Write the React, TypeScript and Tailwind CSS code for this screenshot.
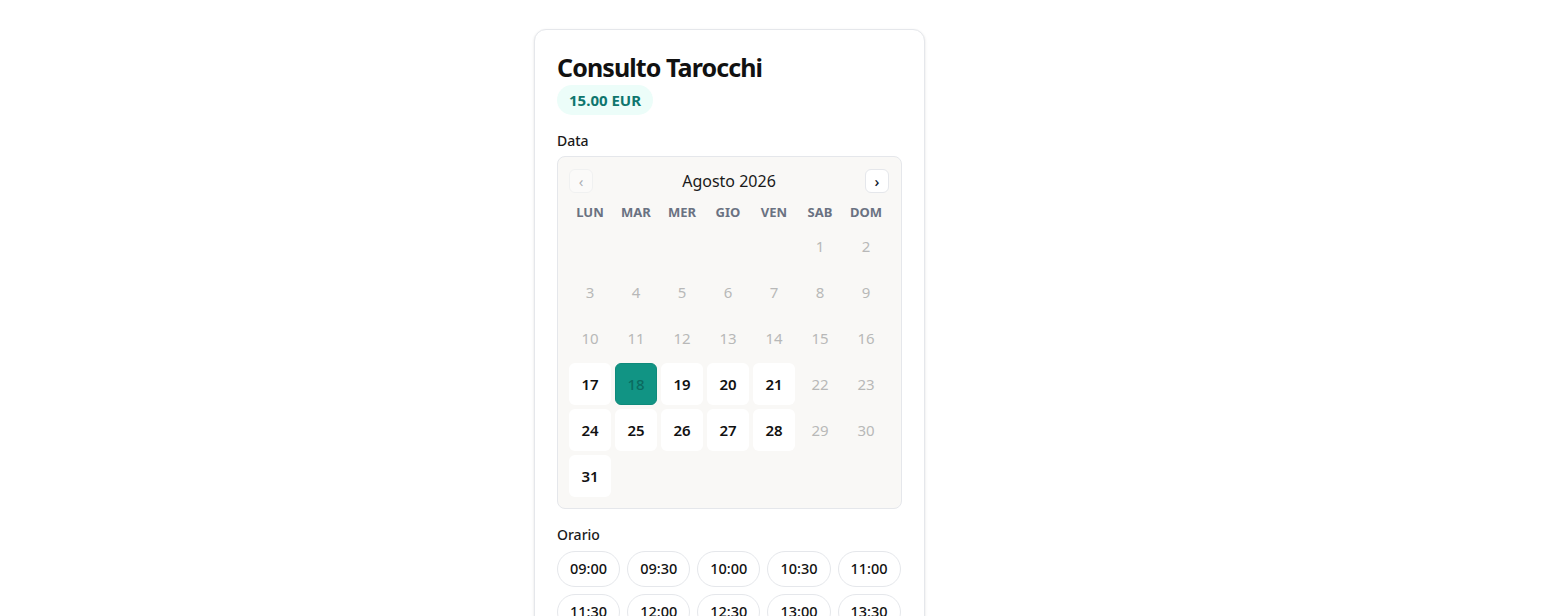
import { useState } from "react";

const WEEKDAYS = ["LUN", "MAR", "MER", "GIO", "VEN", "SAB", "DOM"];
const AVAILABLE = [17, 18, 19, 20, 21, 24, 25, 26, 27, 28, 31];
const TIMES = [
  "09:00", "09:30", "10:00", "10:30", "11:00",
  "11:30", "12:00", "12:30", "13:00", "13:30",
  "14:00", "14:30", "15:00", "15:30", "16:00",
  "16:30", "17:00", "17:30", "18:00",
];

export default function App() {
  const [selected, setSelected] = useState(18);
  const [time, setTime] = useState<string | null>(null);

  // August 2026 starts on a Saturday -> 5 empty cells
  const cells: (number | null)[] = [...Array(5).fill(null), ...Array.from({ length: 31 }, (_, i) => i + 1)];

  return (
    <div
      className="min-h-screen bg-white pt-[29px] pb-16 pl-[534px]"
      style={{ fontFamily: '"Noto Sans", "Open Sans", sans-serif' }}
    >
      <div className="w-[391px] bg-white border border-gray-200 rounded-xl shadow-sm px-[22px] pt-[20px] pb-8">
        <h1 className="text-[25px] leading-[34px] font-bold text-[#111] tracking-[-0.9px]">Consulto Tarocchi</h1>
        <span className="inline-block mt-[1px] px-3 py-[4px] rounded-full bg-[#ecfdf9] text-[#0f766e] text-[15px] leading-[22px] font-bold">
          15.00 EUR
        </span>

        {/* Data */}
        <div className="mt-[16px] mb-[5px] text-[14px] leading-[20px] font-medium text-[#1a1a1a]">Data</div>
        <div className="bg-[#f9f8f6] border border-gray-200 rounded-lg p-3 pl-[11px] pt-3 pb-[11px]">
          <div className="flex items-center justify-between">
            <button className="w-6 h-6 rounded-md bg-white border border-gray-200 opacity-40 flex items-center justify-center text-[15px] text-gray-700 leading-none">
              ‹
            </button>
            <span className="text-[16px] text-[#1a1a1a]">Agosto 2026</span>
            <button className="w-6 h-6 rounded-md bg-white border border-gray-200 flex items-center justify-center text-[15px] font-medium text-gray-900 leading-none">
              ›
            </button>
          </div>

          <div className="grid grid-cols-[repeat(7,42px)] gap-x-1 mt-[10px] mb-1">
            {WEEKDAYS.map((d) => (
              <div key={d} className="text-center text-[13px] leading-[18px] font-bold text-gray-500">
                {d}
              </div>
            ))}
          </div>

          <div className="grid grid-cols-[repeat(7,42px)] gap-1">
            {cells.map((day, i) => {
              if (day === null) return <div key={i} className="h-[42px]" />;
              const available = AVAILABLE.includes(day);
              if (!available) {
                return (
                  <div key={i} className="h-[42px] flex items-center justify-center text-[15px] text-[#b8b8b8]">
                    {day}
                  </div>
                );
              }
              const isSel = day === selected;
              return (
                <button
                  key={i}
                  onClick={() => setSelected(day)}
                  className={
                    isSel
                      ? "h-[42px] rounded-md bg-[#119484] border border-[#0f8a7b] flex items-center justify-center text-[15px] font-medium text-[#0b6b60]"
                      : "h-[42px] rounded-md bg-white flex items-center justify-center text-[15px] font-semibold text-[#111]"
                  }
                >
                  {day}
                </button>
              );
            })}
          </div>
        </div>

        {/* Orario */}
        <div className="mt-[16px] mb-[6px] text-[14px] leading-[20px] font-medium text-[#1a1a1a]">Orario</div>
        <div className="flex flex-wrap gap-[7px]">
          {TIMES.map((t) => (
            <button
              key={t}
              onClick={() => setTime(t)}
              className={
                t === time
                  ? "h-9 px-3 rounded-full border border-teal-600 bg-teal-600 text-white text-[14.5px] font-medium"
                  : "h-9 px-3 rounded-full border border-gray-200 bg-white text-[14.5px] font-medium text-[#111]"
              }
            >
              {t}
            </button>
          ))}
        </div>

        {/* Dati */}
        <div className="mt-6 space-y-4">
          {["Nome e cognome", "Email", "Telefono"].map((label) => (
            <div key={label}>
              <div className="mb-[6px] text-[14px] font-medium text-[#1a1a1a]">{label}</div>
              <input className="w-full h-10 rounded-lg border border-gray-200 px-3 text-[15px]" />
            </div>
          ))}
          <div>
            <div className="mb-[6px] text-[14px] font-medium text-[#1a1a1a]">Note</div>
            <textarea className="w-full h-28 rounded-lg border border-gray-200 px-3 py-2 text-[15px]" />
          </div>
        </div>

        <div className="mt-6 rounded-lg bg-[#f9f8f6] border border-gray-200 p-4 text-[14px] text-gray-600 space-y-2">
          <div className="flex justify-between"><span>Servizio</span><span className="font-medium text-gray-900">Consulto Tarocchi</span></div>
          <div className="flex justify-between"><span>Durata</span><span className="font-medium text-gray-900">30 min</span></div>
          <div className="flex justify-between"><span>Totale</span><span className="font-bold text-gray-900">15.00 EUR</span></div>
        </div>

        <button className="mt-6 w-full h-12 rounded-full bg-[#0d9488] text-white font-bold text-[15px]">
          Prenota
        </button>
        <div className="h-[600px]" />
      </div>
    </div>
  );
}
